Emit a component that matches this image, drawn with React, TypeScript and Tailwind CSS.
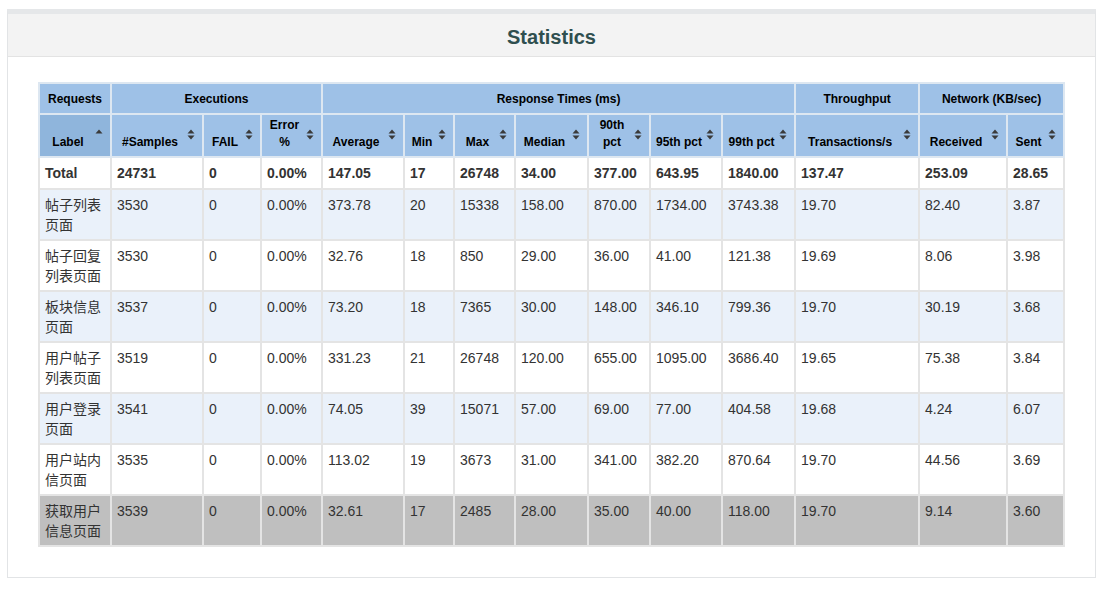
import React from 'react';

type Row = { label: string; v: string[]; bg: string; bold?: boolean };

const COLS = [
    { name: 'Label', w: 72, asc: true },
    { name: '#Samples', w: 92 },
    { name: 'FAIL', w: 58 },
    { name: 'Error %', w: 61 },
    { name: 'Average', w: 82 },
    { name: 'Min', w: 50 },
    { name: 'Max', w: 61 },
    { name: 'Median', w: 73 },
    { name: '90th pct', w: 62 },
    { name: '95th pct', w: 72 },
    { name: '99th pct', w: 73 },
    { name: 'Transactions/s', w: 124 },
    { name: 'Received', w: 88 },
    { name: 'Sent', w: 57 },
];

const ROWS: Row[] = [
    { label: 'Total', v: ['24731', '0', '0.00%', '147.05', '17', '26748', '34.00', '377.00', '643.95', '1840.00', '137.47', '253.09', '28.65'], bg: 'bg-white', bold: true },
    { label: '帖子列表页面', v: ['3530', '0', '0.00%', '373.78', '20', '15338', '158.00', '870.00', '1734.00', '3743.38', '19.70', '82.40', '3.87'], bg: 'bg-[#eaf1fa]' },
    { label: '帖子回复列表页面', v: ['3530', '0', '0.00%', '32.76', '18', '850', '29.00', '36.00', '41.00', '121.38', '19.69', '8.06', '3.98'], bg: 'bg-white' },
    { label: '板块信息页面', v: ['3537', '0', '0.00%', '73.20', '18', '7365', '30.00', '148.00', '346.10', '799.36', '19.70', '30.19', '3.68'], bg: 'bg-[#eaf1fa]' },
    { label: '用户帖子列表页面', v: ['3519', '0', '0.00%', '331.23', '21', '26748', '120.00', '655.00', '1095.00', '3686.40', '19.65', '75.38', '3.84'], bg: 'bg-white' },
    { label: '用户登录页面', v: ['3541', '0', '0.00%', '74.05', '39', '15071', '57.00', '69.00', '77.00', '404.58', '19.68', '4.24', '6.07'], bg: 'bg-[#eaf1fa]' },
    { label: '用户站内信页面', v: ['3535', '0', '0.00%', '113.02', '19', '3673', '31.00', '341.00', '382.20', '870.64', '19.70', '44.56', '3.69'], bg: 'bg-white' },
    { label: '获取用户信息页面', v: ['3539', '0', '0.00%', '32.61', '17', '2485', '28.00', '35.00', '40.00', '118.00', '19.70', '9.14', '3.60'], bg: 'bg-[#bfbfbf]' },
];

function SortIcon({ asc }: { asc?: boolean }) {
    return (
        <svg width="8" height="11" viewBox="0 0 8 11" className="absolute right-[7px] top-1/2 -translate-y-[7px]">
            <path d="M4 0.5 L7.5 4.5 L0.5 4.5 Z" fill="#3a3a3a" />
            {!asc && <path d="M4 10.5 L7.5 6.5 L0.5 6.5 Z" fill="#3a3a3a" />}
        </svg>
    );
}

export default function App() {
    return (
        <div className="min-h-[589px] bg-white pt-[9px] pl-[7px] font-['Liberation_Sans','Noto_Sans_CJK_SC',sans-serif]">
            <section className="w-[1089px] border border-t-[5px] border-[#e2e4e6] border-t-[#e5e7e9] bg-white">
                <header className="flex h-[43px] items-center justify-center border-b border-[#e3e3e3] bg-[#f3f3f3] pt-[4px]">
                    <h2 className="text-[20px] font-bold text-[#2f4f4f]">Statistics</h2>
                </header>

                <div className="px-[30px] pt-[25px] pb-[30px]">
                    <table className="w-[1025px] table-fixed border-collapse text-[14px] text-[#333]">
                        <colgroup>
                            {COLS.map((c) => (
                                <col key={c.name} style={{ width: c.w }} />
                            ))}
                        </colgroup>
                        <thead className="text-[12px] font-bold text-black">
                            <tr className="h-[31px] bg-[#9ec1e7]">
                                <th className="border-2 border-[#dde7f1]">Requests</th>
                                <th colSpan={3} className="border-2 border-[#dde7f1]">Executions</th>
                                <th colSpan={7} className="border-2 border-[#dde7f1]">Response Times (ms)</th>
                                <th className="border-2 border-[#dde7f1]">Throughput</th>
                                <th colSpan={2} className="border-2 border-[#dde7f1]">Network (KB/sec)</th>
                            </tr>
                            <tr className="h-[43px]">
                                {COLS.map((c) => (
                                    <th
                                        key={c.name}
                                        className={`relative border-2 border-[#dde7f1] pr-[18px] pb-[5px] pl-[4px] text-center align-bottom leading-[17px] ${c.asc ? 'bg-[#8fb5dc]' : 'bg-[#9ec1e7]'}`}>
                                        {c.name}
                                        <SortIcon asc={c.asc} />
                                    </th>
                                ))}
                            </tr>
                        </thead>
                        <tbody>
                            {ROWS.map((r) => (
                                <tr key={r.label} className={`${r.bg} ${r.bold ? 'h-[32px] font-bold' : 'h-[49px]'}`}>
                                    <td className={`border-2 border-[#e4e4e4] px-[5px] leading-[20px] ${r.bold ? 'align-middle' : 'pt-[5px] pb-[4px] align-top'}`}>
                                        {r.label}
                                    </td>
                                    {r.v.map((x, i) => (
                                        <td
                                            key={i}
                                            className={`border-2 border-[#e4e4e4] px-[5px] leading-[20px] ${r.bold ? 'align-middle' : 'pt-[5px] align-top'}`}>
                                            {x}
                                        </td>
                                    ))}
                                </tr>
                            ))}
                        </tbody>
                    </table>
                </div>
            </section>
        </div>
    );
}
